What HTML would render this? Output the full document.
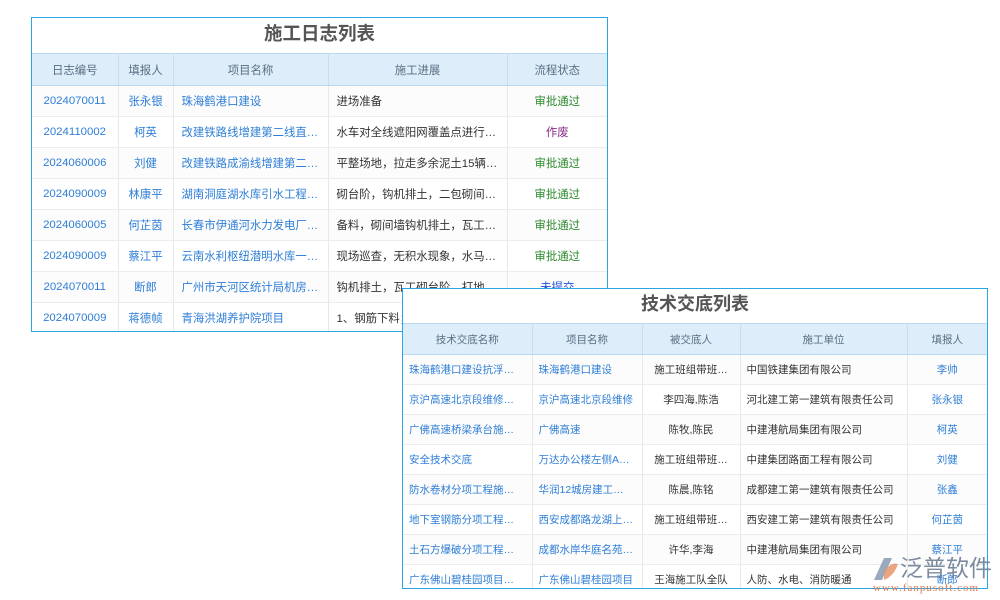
<!DOCTYPE html>
<html><head><meta charset="utf-8"><style>
*{margin:0;padding:0;box-sizing:border-box}
body{width:1000px;height:600px;background:#fff;position:relative;overflow:hidden;font-family:"Liberation Sans","Noto Sans CJK SC",sans-serif;font-size:10.5px;color:#333}
.box{position:absolute;background:#fff;border:1px solid #2aa6e6;overflow:hidden}
.title{text-align:center;font-weight:bold;font-size:18px;color:#555;}
table{border-collapse:collapse;table-layout:fixed;width:100%}
th{background:#ddeefa;color:#5a6e82;font-weight:normal;border-right:1px solid #c9dff0;border-top:1px solid #b9d8ef;border-bottom:1px solid #b9d8ef}
td{border-right:1px solid #e8e8e8;border-bottom:1px solid #ececec;white-space:nowrap;overflow:hidden;padding:0 6px}
tr:nth-child(even) td{background:#fcfcfc}
th:last-child,td:last-child{border-right:none}
.t1{font-size:11.4px}
.t1 .title{font-size:18.5px}
.t1 td{padding:0 8px}
.c{text-align:center}
.b{color:#2e7ed6}
.g{color:#2d8a2d}
.p{color:#8a2a8a}
.u{color:#1f4fd6}
</style></head><body>
<div class="box t1" style="left:31px;top:17px;width:577px;height:315px">
<div class="title" style="height:35px;line-height:31px">施工日志列表</div>
<table>
<colgroup><col style="width:86px"><col style="width:55px"><col style="width:155px"><col style="width:179px"><col></colgroup>
<tr style="height:32px"><th>日志编号</th><th>填报人</th><th>项目名称</th><th>施工进展</th><th>流程状态</th></tr>
<tr style="height:31px"><td class="c b">2024070011</td><td class="c b">张永银</td><td class="b">珠海鹤港口建设</td><td>进场准备</td><td class="c g">审批通过</td></tr>
<tr style="height:31px"><td class="c b">2024110002</td><td class="c b">柯英</td><td class="b">改建铁路线增建第二线直…</td><td>水车对全线遮阳网覆盖点进行…</td><td class="c p">作废</td></tr>
<tr style="height:31px"><td class="c b">2024060006</td><td class="c b">刘健</td><td class="b">改建铁路成渝线增建第二…</td><td>平整场地，拉走多余泥土15辆…</td><td class="c g">审批通过</td></tr>
<tr style="height:31px"><td class="c b">2024090009</td><td class="c b">林康平</td><td class="b">湖南洞庭湖水库引水工程…</td><td>砌台阶，钩机排土，二包砌间…</td><td class="c g">审批通过</td></tr>
<tr style="height:31px"><td class="c b">2024060005</td><td class="c b">何芷茵</td><td class="b">长春市伊通河水力发电厂…</td><td>备料，砌间墙钩机排土，瓦工…</td><td class="c g">审批通过</td></tr>
<tr style="height:31px"><td class="c b">2024090009</td><td class="c b">蔡江平</td><td class="b">云南水利枢纽潜明水库一…</td><td>现场巡查，无积水现象，水马…</td><td class="c g">审批通过</td></tr>
<tr style="height:31px"><td class="c b">2024070011</td><td class="c b">断郎</td><td class="b">广州市天河区统计局机房…</td><td>钩机排土，瓦工砌台阶，打地…</td><td class="c u">未提交</td></tr>
<tr style="height:31px"><td class="c b">2024070009</td><td class="c b">蒋德帧</td><td class="b">青海洪湖养护院项目</td><td>1、钢筋下料；2、…</td><td class="c u"></td></tr>
</table></div>

<div class="box" style="left:402px;top:288px;width:586px;height:301px">
<div class="title" style="height:34px;line-height:31px">技术交底列表</div>
<table>
<colgroup><col style="width:129px"><col style="width:110px"><col style="width:98px"><col style="width:167px"><col></colgroup>
<tr style="height:31px"><th>技术交底名称</th><th>项目名称</th><th>被交底人</th><th>施工单位</th><th>填报人</th></tr>
<tr style="height:30px"><td class="b">珠海鹤港口建设抗浮…</td><td class="b">珠海鹤港口建设</td><td class="c">施工班组带班…</td><td>中国铁建集团有限公司</td><td class="c b">李帅</td></tr>
<tr style="height:30px"><td class="b">京沪高速北京段维修…</td><td class="b">京沪高速北京段维修</td><td class="c">李四海,陈浩</td><td>河北建工第一建筑有限责任公司</td><td class="c b">张永银</td></tr>
<tr style="height:30px"><td class="b">广佛高速桥梁承台施…</td><td class="b">广佛高速</td><td class="c">陈牧,陈民</td><td>中建港航局集团有限公司</td><td class="c b">柯英</td></tr>
<tr style="height:30px"><td class="b">安全技术交底</td><td class="b">万达办公楼左侧A…</td><td class="c">施工班组带班…</td><td>中建集团路面工程有限公司</td><td class="c b">刘健</td></tr>
<tr style="height:30px"><td class="b">防水卷材分项工程施…</td><td class="b">华润12城房建工…</td><td class="c">陈晨,陈铭</td><td>成都建工第一建筑有限责任公司</td><td class="c b">张鑫</td></tr>
<tr style="height:30px"><td class="b">地下室钢筋分项工程…</td><td class="b">西安成都路龙湖上…</td><td class="c">施工班组带班…</td><td>西安建工第一建筑有限责任公司</td><td class="c b">何芷茵</td></tr>
<tr style="height:30px"><td class="b">土石方爆破分项工程…</td><td class="b">成都水岸华庭名苑…</td><td class="c">许华,李海</td><td>中建港航局集团有限公司</td><td class="c b">蔡江平</td></tr>
<tr style="height:30px"><td class="b">广东佛山碧桂园项目…</td><td class="b">广东佛山碧桂园项目</td><td class="c">王海施工队全队</td><td>人防、水电、消防暖通</td><td class="c b">断郎</td></tr>
</table></div>

<div style="position:absolute;left:868px;top:552px;width:132px;height:48px">
<svg width="30" height="30" viewBox="0 0 30 30" style="position:absolute;left:2px;top:2px">
<path d="M4 26 L14 4 L22 4 L12 26 Z" fill="#8a9ab0" opacity="0.85"/>
<path d="M14 18 Q20 8 28 10 Q24 22 14 26 Z" fill="#e8946a" opacity="0.85"/>
</svg>
<div style="position:absolute;left:32px;top:0;font-size:23px;line-height:28px;color:#6f7f96;font-family:'Noto Sans CJK SC',sans-serif;opacity:0.9;white-space:nowrap">泛普软件</div>
<div style="position:absolute;left:5px;top:30px;font-size:11px;color:#e07a50;font-family:'Liberation Serif',serif;letter-spacing:1px;white-space:nowrap">www.fanpusoft.com</div>
</div>
</body></html>
